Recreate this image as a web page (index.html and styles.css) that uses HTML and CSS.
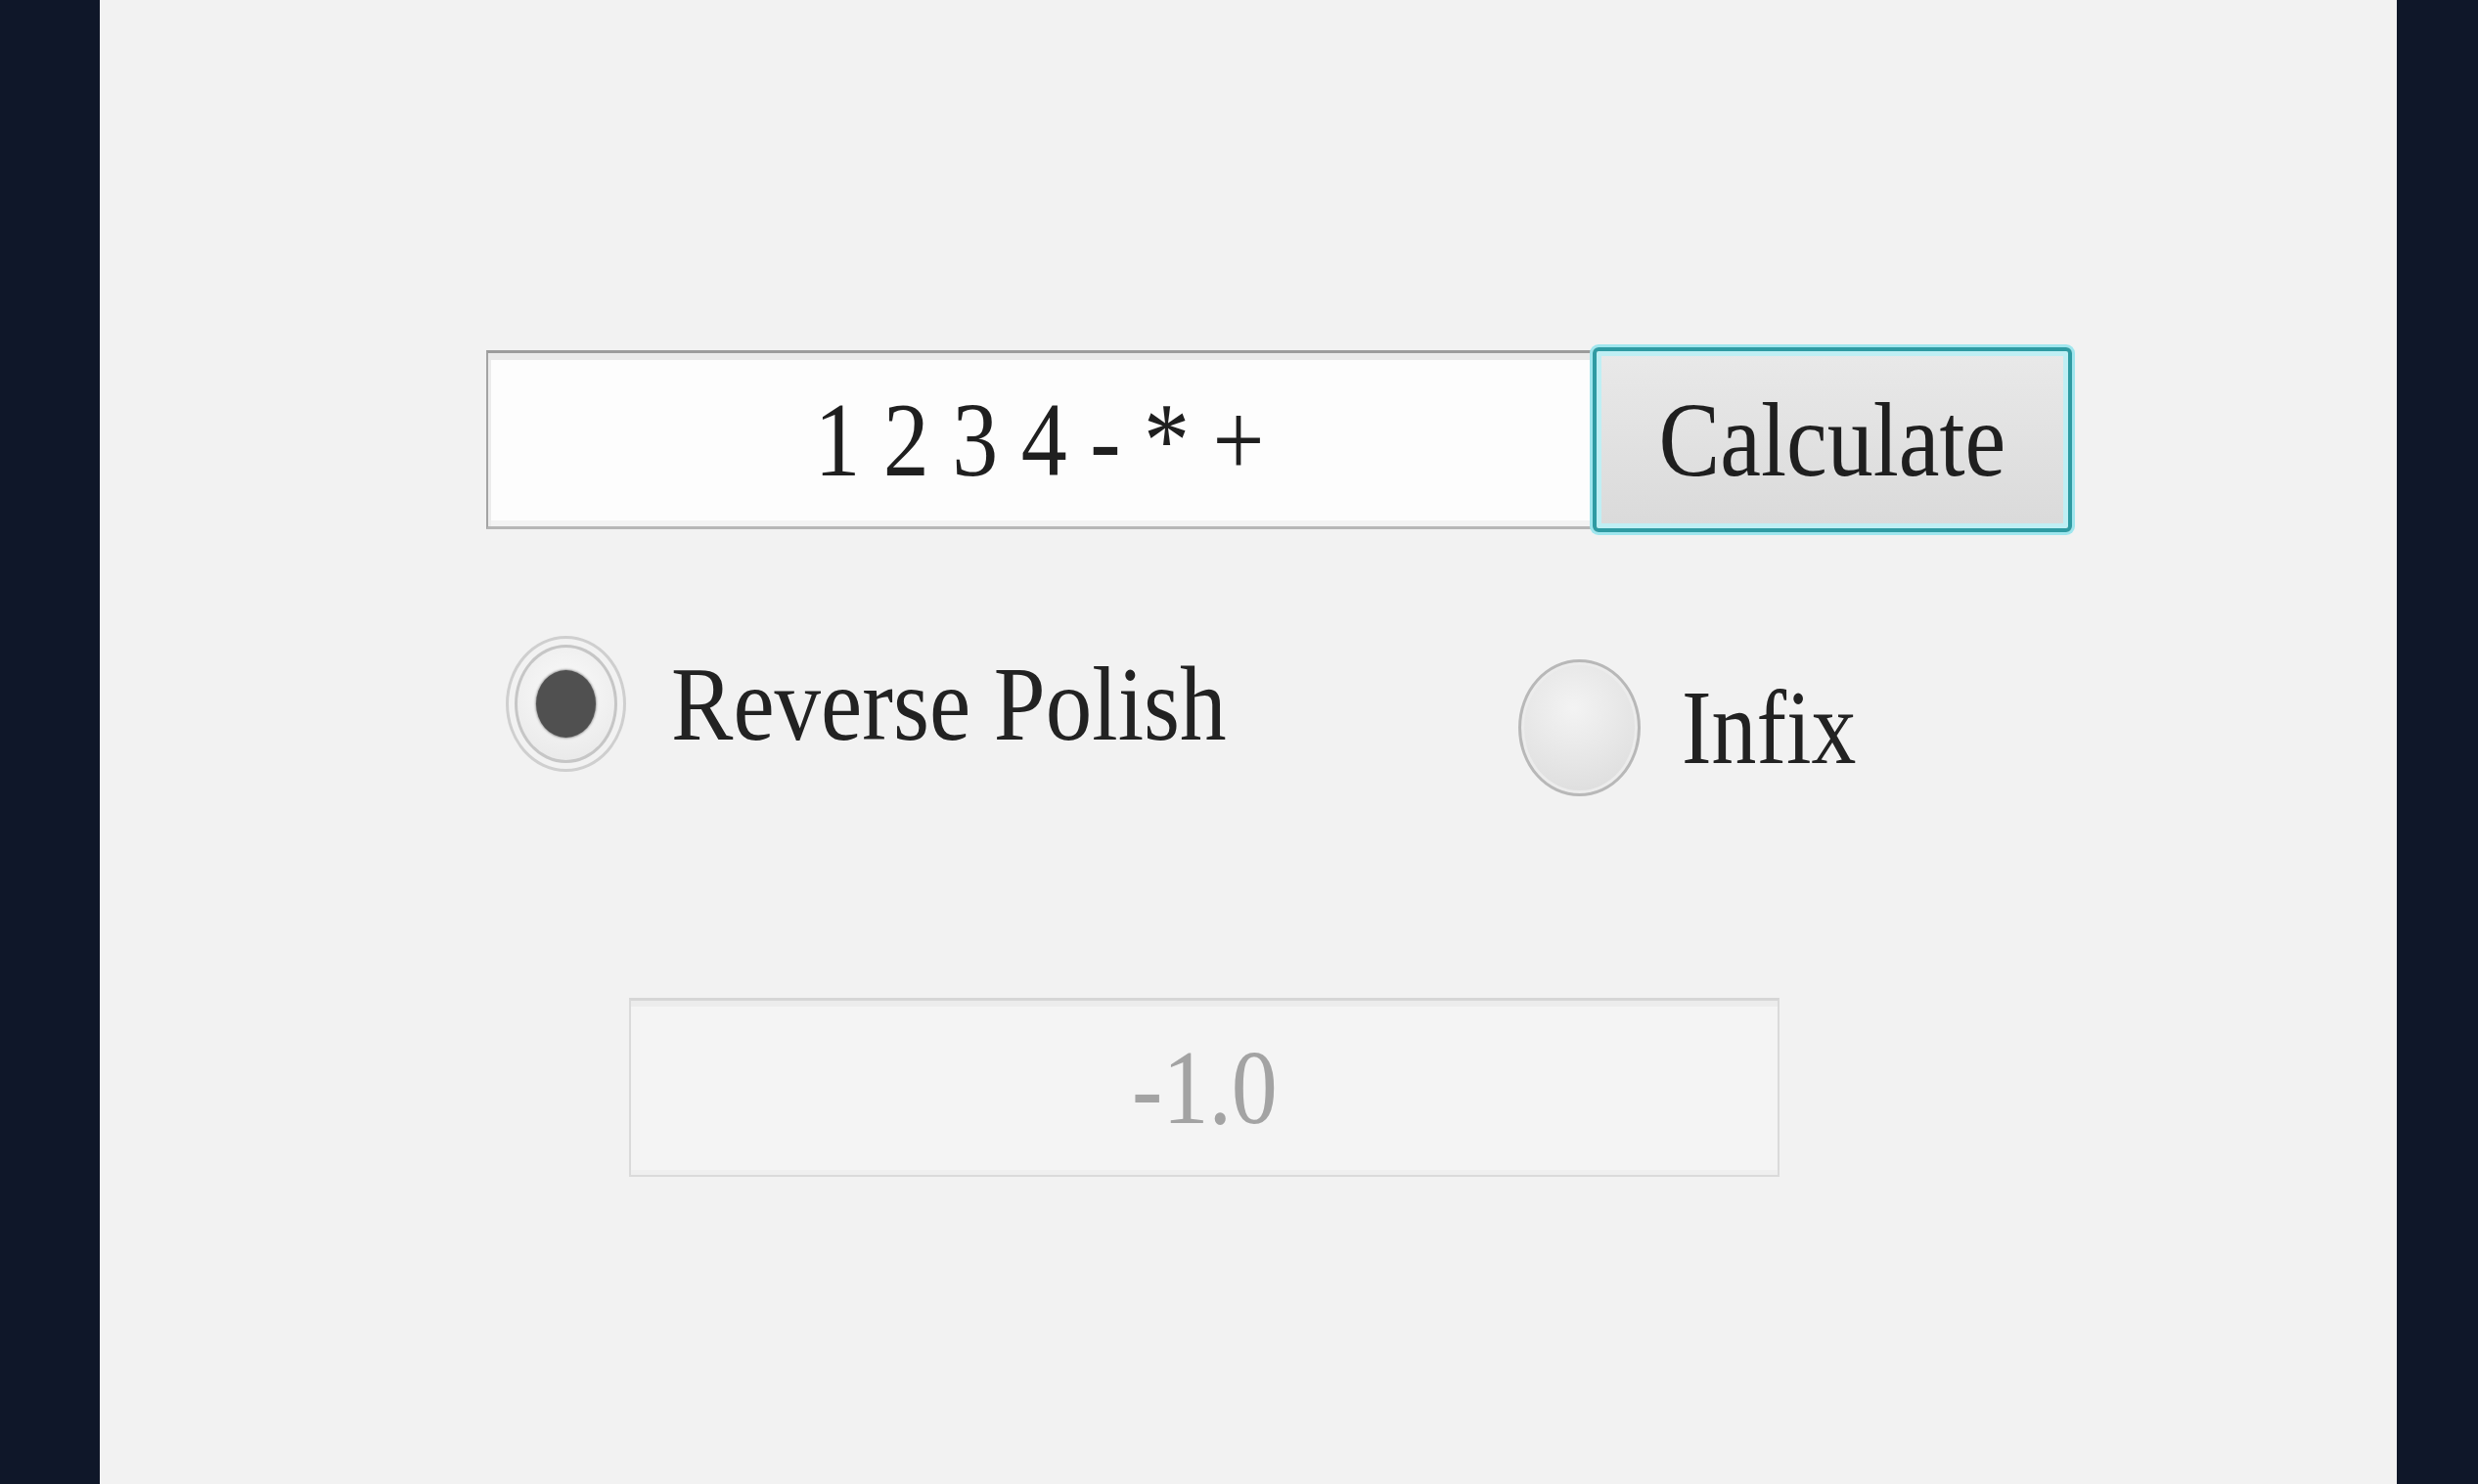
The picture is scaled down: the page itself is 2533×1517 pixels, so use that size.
FILE: index.html
```html
<!DOCTYPE html>
<html lang="en">
<head>
<meta charset="utf-8">
<title>Calculator</title>
<link rel="stylesheet" href="styles.css">
</head>
<body>
<div class="frame">
  <main class="panel">
    <div class="entry-row">
      <div class="expr"><span class="txt">1 2 3 4 - * +</span></div>
      <button class="calc"><span class="txt">Calculate</span></button>
    </div>
    <div class="options">
      <label class="option option-rpn">
        <span class="radio checked"><span class="radio-inner"><span class="dot"></span></span></span>
        <span class="txt label">Reverse Polish</span>
      </label>
      <label class="option option-infix">
        <span class="radio plain"></span>
        <span class="txt label">Infix</span>
      </label>
    </div>
    <div class="result"><span class="txt">-1.0</span></div>
  </main>
</div>
</body>
</html>
```

FILE: styles.css
```css
html, body {
  margin: 0;
  padding: 0;
  height: 100%;
}
body {
  background: #0f1729;
  font-family: "Liberation Serif", "Times New Roman", serif;
  color: #222;
}
.frame {
  display: flex;
  height: 1517px;
  padding: 0 83px 0 102px;
}
.panel {
  flex: 1;
  background: #f2f2f2;
  padding: 355px 0 0 395px;
  box-sizing: border-box;
}
.txt {
  display: inline-block;
  font-size: 108px;
  line-height: 1;
  transform: scaleX(0.87);
  white-space: pre;
}
.entry-row {
  display: flex;
  align-items: center;
  height: 189px;
}
.expr {
  width: 1131px;
  height: 183px;
  box-sizing: border-box;
  background: #fdfdfd;
  border: 2px solid #a3a3a3;
  border-top: 3px solid #9c9c9c;
  border-bottom: 3px solid #b6b6b6;
  box-shadow: inset 0 7px 0 #e9e9e9, inset 3px 0 0 #ececec, inset 0 -6px 0 #f3f3f3;
  display: flex;
  align-items: center;
  justify-content: center;
  color: #1f1f1f;
}
.calc {
  width: 490px;
  height: 189px;
  box-sizing: border-box;
  margin: 0;
  padding: 0;
  border: 4px solid #2f9ba3;
  border-radius: 6px;
  background: linear-gradient(#e9e9e9, #dadada);
  box-shadow: 0 0 0 3px #9fe6ee, inset 0 0 0 5px #bfeff4;
  font-family: inherit;
  color: #1f1f1f;
  display: flex;
  align-items: center;
  justify-content: center;
}
.options {
  display: flex;
  align-items: flex-start;
  margin-top: 106px;
  padding-left: 20px;
}
.option {
  display: flex;
  align-items: center;
}
.option-rpn {
  width: 1035px;
  gap: 46px;
}
.option-infix {
  margin-top: 24px;
  gap: 42px;
}
.option-infix .label {
  transform: scaleX(0.85);
  transform-origin: left center;
}
.option-rpn .label {
  transform: scaleX(0.88);
  transform-origin: left center;
}
.radio {
  display: flex;
  align-items: center;
  justify-content: center;
  box-sizing: border-box;
  border-radius: 50%;
  flex: none;
}
.radio.checked {
  width: 123px;
  height: 139px;
  border: 3px solid #cfcfcf;
  background: #f2f2f2;
}
.radio-inner {
  width: 105px;
  height: 121px;
  box-sizing: border-box;
  border-radius: 50%;
  border: 3px solid #c6c6c6;
  background: radial-gradient(circle at 50% 40%, #fbfbfb, #e6e6e6);
  display: flex;
  align-items: center;
  justify-content: center;
}
.dot {
  width: 61px;
  height: 69px;
  border-radius: 50%;
  background: #505050;
  box-shadow: 0 0 2px 1px rgba(80, 80, 80, 0.5);
}
.radio.plain {
  width: 125px;
  height: 140px;
  border: 3px solid #b8b8b8;
  background: radial-gradient(circle at 45% 35%, #f3f3f3, #e1e1e1 70%, #d8d8d8);
  box-shadow: inset 0 0 0 3px #ececec;
}
.result {
  margin: 206px 0 0 146px;
  width: 1176px;
  height: 183px;
  box-sizing: border-box;
  background: #f4f4f4;
  border: 2px solid #dadada;
  border-top: 3px solid #d6d6d6;
  box-shadow: inset 0 6px 0 #ececec, inset 0 -5px 0 #efefef;
  display: flex;
  align-items: center;
  justify-content: center;
  color: #a3a3a3;
}
```
